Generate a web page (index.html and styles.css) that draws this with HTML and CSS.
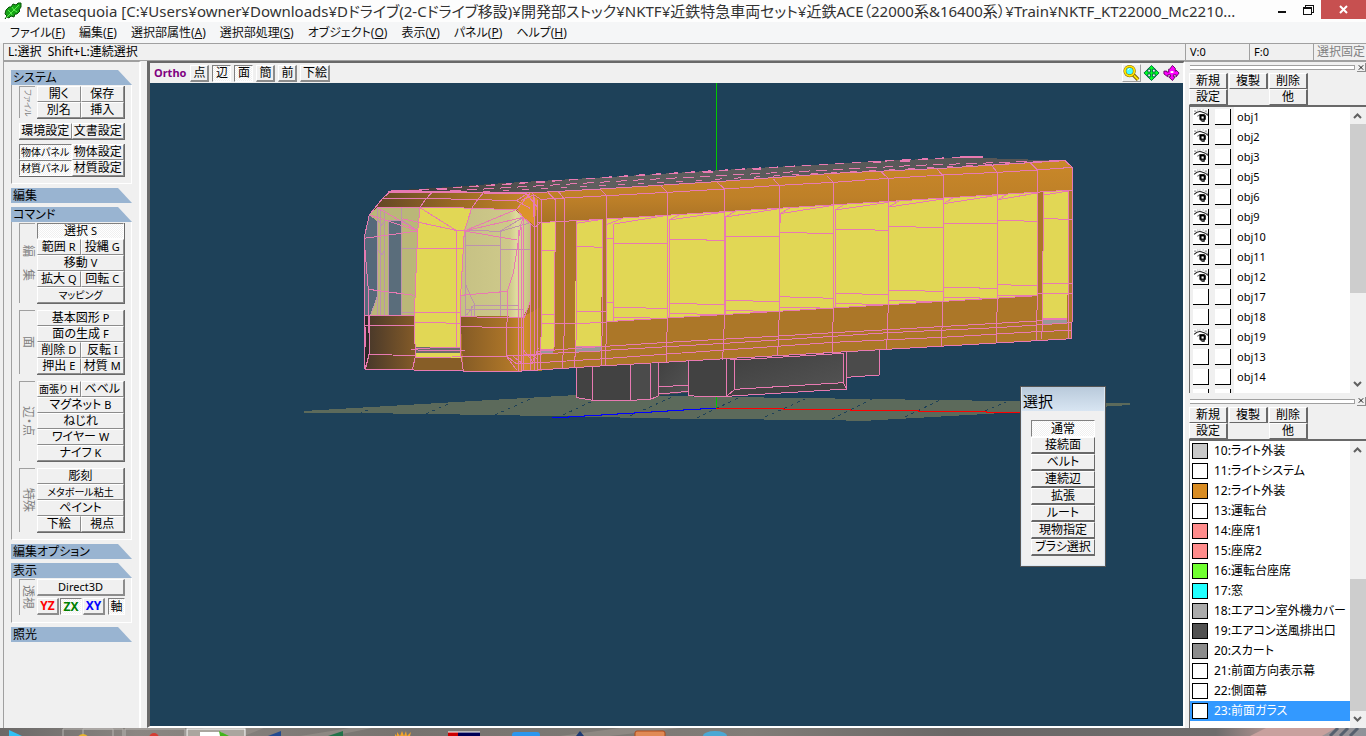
FILE: index.html
```html
<!DOCTYPE html>
<html lang="ja">
<head>
    <meta charset="UTF-8">
    <meta name="viewport" content="width=device-width, initial-scale=1.0">
    <title>Metasequoia</title>
    <link rel="stylesheet" href="styles.css">
</head>
<body>
    <!-- Iconos compartidos -->
    <svg class="defs" width="0" height="0">
        <symbol id="eye" viewBox="0 0 15 15">
            <path d="M1 5 Q5 1 9 3 Q13 4 14 6" fill="none" stroke="#222" stroke-width="1"/>
            <path d="M1 2h2M4 1h1M6 1h1M9 1h1M11 2h2M12 4h2" stroke="#999"/>
            <path d="M4 7 Q7 4 12 6" fill="none" stroke="#777"/>
            <path d="M6 5h5v1h1v4h-1v2H8v-1H7v-1H6z" fill="#000"/>
            <path d="M8 10h2v1H8z" fill="#777"/>
            <rect x="8" y="7" width="2" height="2" fill="#fff"/>
        </symbol>
        <symbol id="up" viewBox="0 0 15 17"><path d="M4 11 L7.500 7.500 L11 11" fill="none" stroke="#606060" stroke-width="2"/></symbol>
        <symbol id="down" viewBox="0 0 15 17"><path d="M4 6 L7.500 9.500 L11 6" fill="none" stroke="#606060" stroke-width="2"/></symbol>
        <symbol id="close" viewBox="0 0 9 9"><path d="M2 2l5 5M7 2l-5 5" stroke="#000" fill="none"/></symbol>
    </svg>

    <header class="titlebar">
        <svg class="leaf" viewBox="0 0 18 18">
            <path d="M1 17 L3 14 L1 12 L2 8 L5 5 L7 5 L9 2 L12 3 L14 1 L17 1 L17 5 L15 8 L16 9 L13 12 L11 12 L10 15 L7 14 L5 16 L3 15 Z" fill="#17a317" stroke="#075207"/>
            <path d="M2 16 L15 3 M4 8 L7 11 M8 5 L10 8 M8 13 L7 11 M13 10 L10 8" stroke="#5cf04c" fill="none"/>
        </svg>
        <h1>Metasequoia [C:¥Users¥owner¥Downloads¥Dドライブ(2-Cドライブ移設)¥開発部ストック¥NKTF¥近鉄特急車両セット¥近鉄ACE（22000系&amp;16400系）¥Train¥NKTF_KT22000_Mc2210...</h1>
        <div class="window-buttons">
            <button aria-label="最小化"><svg width="10" height="12" viewBox="0 0 10 12"><path d="M1 7h8v2H1z" fill="#111"/></svg></button>
            <button aria-label="元に戻す"><svg width="12" height="12" viewBox="0 0 12 12"><path d="M3 3V1h8v7H9M1 3h8v7H1zM1 4h8" fill="none" stroke="#111" shape-rendering="crispEdges"/></svg></button>
            <button class="quit" aria-label="閉じる"><svg width="10" height="10" viewBox="0 0 10 10"><path d="M1 1l7 7M8 1l-7 7" stroke="#fff" stroke-width="2"/></svg></button>
        </div>
    </header>

    <nav class="menubar">
        <a href="#">ファイル(<u>F</u>)</a>
        <a href="#">編集(<u>E</u>)</a>
        <a href="#">選択部属性(<u>A</u>)</a>
        <a href="#">選択部処理(<u>S</u>)</a>
        <a href="#">オブジェクト(<u>O</u>)</a>
        <a href="#">表示(<u>V</u>)</a>
        <a href="#">パネル(<u>P</u>)</a>
        <a href="#">ヘルプ(<u>H</u>)</a>
    </nav>

    <div class="status">
        <span class="hint">L:選択&nbsp; Shift+L:連続選択</span>
        <span class="count">V:0</span>
        <span class="count">F:0</span>
        <span class="lock">選択固定</span>
    </div>

    <main>
        <aside class="sidebar">
            <section>
                <h2>システム</h2>
                <div class="body system">
                    <div class="group">
                        <span class="side small">ファイル</span>
                        <div class="keys">
                            <button>開く</button><button>保存</button>
                            <button>別名</button><button>挿入</button>
                        </div>
                    </div>
                    <div class="keys full">
                        <button>環境設定</button><button>文書設定</button>
                    </div>
                    <div class="keys full">
                        <button class="on tight">物体パネル</button><button>物体設定</button>
                        <button class="on tight">材質パネル</button><button>材質設定</button>
                    </div>
                </div>
            </section>
            <section><h2>編集</h2></section>
            <section>
                <h2>コマンド</h2>
                <div class="body">
                    <div class="group">
                        <span class="side">編　集</span>
                        <div class="keys">
                            <button class="wide on">選択 <i>S</i></button>
                            <button>範囲 <i>R</i></button><button>投縄 <i>G</i></button>
                            <button class="wide">移動 <i>V</i></button>
                            <button>拡大 <i>Q</i></button><button>回転 <i>C</i></button>
                            <button class="wide tight">マッピング</button>
                        </div>
                    </div>
                    <div class="group">
                        <span class="side">面</span>
                        <div class="keys">
                            <button class="wide">基本図形 <i>P</i></button>
                            <button class="wide">面の生成 <i>F</i></button>
                            <button>削除 <i>D</i></button><button>反転 <i>I</i></button>
                            <button>押出 <i>E</i></button><button>材質 <i>M</i></button>
                        </div>
                    </div>
                    <div class="group">
                        <span class="side">辺・点</span>
                        <div class="keys">
                            <button class="tight">面張り <i>H</i></button><button>ベベル</button>
                            <button class="wide">マグネット <i>B</i></button>
                            <button class="wide">ねじれ</button>
                            <button class="wide">ワイヤー <i>W</i></button>
                            <button class="wide">ナイフ <i>K</i></button>
                        </div>
                    </div>
                    <div class="group">
                        <span class="side">特殊</span>
                        <div class="keys">
                            <button class="wide">彫刻</button>
                            <button class="wide tight">メタボール粘土</button>
                            <button class="wide">ペイント</button>
                            <button>下絵</button><button>視点</button>
                        </div>
                    </div>
                </div>
            </section>
            <section><h2>編集オプション</h2></section>
            <section>
                <h2>表示</h2>
                <div class="body">
                    <div class="group">
                        <span class="side">透視</span>
                        <div class="display">
                            <button class="raised direct">Direct3D</button>
                            <div class="axes">
                                <button class="raised yz">YZ</button>
                                <button class="on zx">ZX</button>
                                <button class="raised xy">XY</button>
                                <button class="on axis">軸</button>
                            </div>
                        </div>
                    </div>
                </div>
            </section>
            <section><h2>照光</h2></section>
        </aside>

        <section class="view">
            <div class="viewbar">
                <b>Ortho</b>
                <button class="raised">点</button>
                <button class="on">辺</button>
                <button class="on">面</button>
                <button class="raised">簡</button>
                <button class="raised">前</button>
                <button class="raised long">下絵</button>
                <div class="tools">
                    <button class="magnify" aria-label="拡大"><svg width="18" height="18" viewBox="0 0 18 18"><path d="M10 10l6 6" stroke="#806000" stroke-width="4"/><path d="M10 10l6 6" stroke="#ffe600" stroke-width="2"/><circle cx="7" cy="7" r="5" fill="#4ff" stroke="#806000" stroke-width="3"/><circle cx="7" cy="7" r="5" fill="none" stroke="#ffe600" stroke-width="2"/><path d="M5 6l2-2" stroke="#fff"/></svg></button>
                    <button aria-label="移動"><svg width="18" height="18" viewBox="0 0 18 18"><path d="M9 1l4 4h-3v3h3V5l4 4-4 4v-3h-3v3h3l-4 4-4-4h3v-3H5v3L1 9l4-4v3h3V5H5z" fill="#0f2" stroke="#064" /></svg></button>
                    <button aria-label="回転"><svg width="18" height="18" viewBox="0 0 18 18"><path d="M10 1l3 3v3h1V6l3 3-3 4v-2h-3v2h2l-3 4-4-4h2v-2H5v2L1 10V7h3v1h2V5h1z" fill="#f0f" stroke="#606"/><path d="M8 7h3v2H8z" fill="#fff"/></svg></button>
                </div>
            </div>
            <div class="canvas">
                <svg class="scene" viewBox="150 83 1033 643" preserveAspectRatio="xMidYMid slice">
                    <defs>
                        <linearGradient id="roof" x1="0" x2="1" y1="0" y2="0"><stop offset="0" stop-color="#3c3935"/><stop offset=".3" stop-color="#5f5f5f"/><stop offset="1" stop-color="#555"/></linearGradient>
                        <linearGradient id="brow" x1="0" x2="1" y1="0" y2="0"><stop offset="0" stop-color="#5f4526"/><stop offset=".5" stop-color="#986824"/><stop offset="1" stop-color="#c98829"/></linearGradient>
                        <linearGradient id="band" x1="0" x2="0" y1="0" y2="1"><stop offset="0" stop-color="#c98829"/><stop offset=".6" stop-color="#be8028"/><stop offset="1" stop-color="#a87226"/></linearGradient>
                        <linearGradient id="noseLeft" x1="0" x2="1" y1="0" y2="0"><stop offset="0" stop-color="#45362a"/><stop offset="1" stop-color="#845b28"/></linearGradient>
                        <linearGradient id="noseRight" x1="0" x2="1" y1="0" y2="0"><stop offset="0" stop-color="#845b26"/><stop offset=".6" stop-color="#ae7628"/><stop offset=".8" stop-color="#d08d2b"/><stop offset="1" stop-color="#ac7728"/></linearGradient>
                        <linearGradient id="glass" x1="0" x2="1" y1="0" y2="0"><stop offset="0" stop-color="#c6c184"/><stop offset=".7" stop-color="#cec98a"/><stop offset=".8" stop-color="#dfdb9e"/><stop offset="1" stop-color="#c5bf83"/></linearGradient>
                        <linearGradient id="box" x1="0" x2="1" y1="0" y2="1"><stop offset="0" stop-color="#404040"/><stop offset="1" stop-color="#535353"/></linearGradient>
                    </defs>

                    <!-- Suelo y ejes -->
                    <path d="M304 411L576 395L657 396L940 400L1130 403L1130 405L1021 412L862 421L830 420L695 419L494 415L359 413L304 413Z" fill="#5c6a5b"/>
                    <path d="M359 414l13-6M426 414l22-10M495 415l35-16M563 415l32-15M630 416l42-19M697 418l43-21M765 417l40-18M832 419l40-20M905 417l35-17M985 411l21-9" stroke="#1e4159" stroke-dasharray="3 4"/>
                    <path d="M716.500 83V174M716.500 397V408" stroke="#00c800" fill="none"/>
                    <path d="M716 408.500h67v1h67v1h68v1h68v1h40" stroke="#f00" fill="none"/>
                    <path d="M552 417.500h16v-1h16v-1h17v-1h16v-1h17v-1h17v-1h16v-1h16v-1h17v-1h16" stroke="#00f" fill="none"/>

                    <svg x="350" y="140" width="800" height="320" viewBox="0 0 2400 960">
                        <!-- Bajos del coche -->
                        <g fill="#424242" stroke="#e87ab2" stroke-width="3">
                            <path d="M680 660V773L728 781H842L902 778V650Z"/>
                            <path d="M842 650V781L902 778L926 767V650Z" fill="#4b4b4b"/>
                            <path d="M728 660V781M902 650V778" fill="none"/>
                            <path d="M926 650V767L1015 757V650Z" fill="url(#box)" stroke="none"/>
                            <path d="M926 650V767M926 740L1015 736M926 762L1015 754" fill="none"/>
                            <path d="M1015 650V766L1040 769H1130V640Z"/>
                            <path d="M1130 655V769L1490 747V635Z"/>
                            <path d="M1154 660V748L1480 728V640Z" fill="url(#box)"/>
                            <path d="M1130 769L1154 748M1480 728L1490 747M1130 655L1154 660" fill="none"/>
                            <path d="M1490 630V712L1588 705V622Z" fill="#4b4b4b"/>
                        </g>

                        <!-- Techo -->
                        <path d="M120 152L270 143L450 130L860 106L1200 85L1580 64L1830 52L2145 62L2040 72L1775 88L1450 104L1100 128L750 149L575 159Z" fill="url(#roof)"/>
                        <path d="M208 150L860 106L1580 64L1830 52" stroke="#e87ab2" stroke-width="4" stroke-dasharray="28 22" fill="none"/>
                        <path d="M300 153L900 118L1700 76L2145 61" stroke="#e87ab2" stroke-width="3" stroke-dasharray="32 18" fill="none"/>
                        <path d="M400 156L950 126L1700 84L2050 66" stroke="#e87ab2" stroke-width="3" stroke-dasharray="20 38" fill="none"/>
                        <path d="M260 147h30M560 127h26M1060 97h28M1210 87h22M1570 66h22M1650 62h30M1830 52h70" stroke="#e87ab2" stroke-width="6"/>

                        <!-- Caja -->
                        <path d="M115 155L575 157L750 147L1100 125L1450 100L1775 85L2040 68L2145 62L2167 82V500L2165 596L1610 628L750 678L500 694L340 693L45 687L42 555V295L58 225L98 175Z" fill="#ac7728"/>
                        <path d="M575 157L750 147L1100 125L1450 100L1775 85L2040 68L2145 62L2167 82V150L1450 195L770 237L560 248L540 160Z" fill="url(#band)"/>
                        <path d="M115 155L560 157L500 208L365 205L82 203L58 225L98 175Z" fill="url(#brow)"/>
                        <path d="M500 205L530 162L565 178L552 255L520 232Z" fill="#dc932b"/>

                        <!-- Frontal -->
                        <path d="M58 225L82 245V470L62 525H45L42 295Z" fill="#56697a"/>
                        <path d="M80 203H210L203 275L193 525H60L82 470V245L58 225Z" fill="#bab778"/>
                        <path d="M116 240H155V525H116Z" fill="#5a6d7b"/>
                        <path d="M210 203L365 205L343 273L332 525V620H196L193 525L203 275Z" fill="#e1d755"/>
                        <path d="M365 205L495 208L520 232L541 248V485L520 530L332 528L343 273Z" fill="url(#glass)"/>
                        <path d="M42 528L193 525L196 650L190 690L45 687Z" fill="url(#noseLeft)"/>
                        <path d="M332 528L520 530L575 500V692L500 694L340 693Z" fill="url(#noseRight)"/>
                        <path d="M196 620H332V640H196Z" fill="#6c6c6c"/>
                        <path d="M196 640H332V653H196Z" fill="#e1d755"/>
                        <path d="M196 653H332L340 692L190 690Z" fill="#875e27"/>
                        <path d="M42 528H56V640L45 687Z" fill="#2b2928"/>

                        <!-- Lateral -->
                        <g fill="#e1d755">
                            <path d="M575 248L615 244L612 628H572Z"/>
                            <path d="M678 241L757 238L753 618L675 620Z"/>
                            <path d="M770 237L2062 157V467L770 545Z"/>
                            <path d="M2080 155L2155 152L2152 535H2078Z"/>
                        </g>
                        <path d="M572 630L610 628V640L572 643ZM675 622L753 620V632L675 636ZM2076 537H2152V548L2076 555Z" fill="#999"/>

                        <g fill="none" stroke="#bd93ac" stroke-width="3">
                            <path d="M82 205V525M92 210V525M104 210V525M116 240V525M155 203V525M116 240H155L203 272M155 325H200M155 518H193M84 330l12 14 8-16M84 240l10 16 12-16M62 525l20-55"/>
                            <path d="M345 273V528M345 316H451M451 270V528M345 271L451 274L541 248M451 328H541M345 430L372 490V528M350 525L372 495H505M345 508H520M365 497V528M451 273L520 232"/>
                        </g>

                        <g fill="none" stroke="#e87ab2" stroke-width="3">
                            <!-- contorno -->
                            <path d="M115 155L575 157L750 147L1100 125L1450 100L1775 85L2040 68L2145 62L2167 82V500L2165 596L1610 628L750 678L500 694L340 693L45 687L58 640V528"/>
                            <path d="M45 687L42 555V295L58 225L98 175L124 152H208"/>
                            <path d="M98 175H215L390 179L500 182L530 162M115 158H380L470 162L575 157M82 203H330L365 206L500 208L540 160M58 225L98 175"/>
                            <path d="M250 153L225 180L210 203L203 275L193 525L196 650L187 690M405 153L382 180L365 205L343 273L332 465V640L340 692"/>
                            <path d="M58 225L203 272L82 203M210 203L318 271H343M155 236L318 271M343 273L500 208M343 273L520 232M343 273L500 300M42 295L203 273M318 271V620M200 325H343M55 448L193 466M332 466L472 454M193 517L332 519M196 547L332 550M42 526H193M42 556H196M332 530L472 533H520M332 560L520 563"/>
                            <path d="M42 295L55 448L58 642L196 648M196 625L332 622M184 628L225 632H346M196 653L470 648L575 644M58 642L48 680M45 560V620"/>
                            <path d="M520 232L512 256L490 400L472 454L470 650L500 690M504 270V694M514 260V694M520 232V690M541 248V485L520 540M541 485V694M553 170V694M562 180V694M500 208L520 232L554 262L575 246M530 162L565 205M545 160L575 180M500 182L540 205M512 182L550 165L553 262M575 180V500L571 690M470 648L500 672L553 668M522 632L548 665L565 625M540 640L560 655M490 650L520 672"/>
                            <!-- puertas -->
                            <path d="M594 157L616 180V244L612 628V690M624 153L643 178V570L637 685M575 178L770 167M560 248L757 238M575 331H615M575 522L615 524M575 552L770 548M678 241V600L673 684M678 319L757 322M678 514L770 516M757 238V560L753 675M770 165V548L766 678M675 620H753M572 628H612"/>
                            <path d="M500 672L750 657M520 644L750 633M560 634L750 620M678 250L757 238"/>
                            <!-- montantes -->
                            <path d="M750 147L770 167M930 135L952 157V535L949 667M1100 125L1124 147V523L1118 660M1270 117L1288 136V515L1283 645M1430 107L1450 127V505L1447 636M1593 95L1615 115V495L1610 628M1760 86L1779 107V485L1774 618M1925 77L1942 97V475L1939 607M2040 68L2062 90V467L2059 600M2080 155L2078 535L2075 598M2155 152V595"/>
                            <path d="M791 252V543M958 240V535M1127 230V523M1455 208V505M1781 190V485M1290 220V250M1616 200V230"/>
                            <!-- franjas -->
                            <path d="M770 167L952 157L1124 147L1288 136L1450 127L1615 115L1779 105L1942 97L2062 90L2167 82"/>
                            <path d="M770 237L2167 150M770 545L2062 467"/>
                            <path d="M750 620L952 607L1288 588L1450 578L1615 569L1940 550L2075 542M750 632L1124 610L1450 589L1615 578L1940 563L2167 548M750 657L952 642L1450 607L1775 592L2060 575L2167 571"/>
                            <path d="M770 254L820 234M791 252L952 226M958 240L1124 216M958 240L990 223M1127 231L1288 206M1127 231L1158 212M1290 221L1450 196M1290 221L1320 203M1455 210L1615 187M1455 210L1485 192M1617 201L1779 177M1617 201L1648 182M1781 191L1942 166M1781 191L1812 172M1944 179L2062 159M1944 179L1970 164M2080 165L2155 153"/>
                            <path d="M770 295H791M791 310H952M958 298L1124 301M1127 290H1288M1288 277L1450 281M1455 267L1615 271M1615 260L1779 262M1779 250H1942M1942 241L2062 244M2080 236L2167 238"/>
                            <path d="M770 487H791M791 501L952 506M958 490L1124 494M1127 481L1288 485M1288 470L1450 475M1455 460L1615 464M1615 451L1779 454M1779 442L1942 445M1942 434L2062 437M2080 430L2167 432M2062 460H2167"/>
                            <path d="M791 532L952 535M958 520L1124 524M1127 511L1288 515M1288 501L1450 505M1455 490L1615 494M1615 481L1779 485M1779 472L1942 475M1942 465H2062"/>
                        </g>
                        <path d="M2078 537H2152" stroke="#e87ab2" stroke-width="4"/>
                    </svg>
                </svg>

                <div class="dialog">
                    <h3>選択</h3>
                    <div class="choices">
                        <button class="on">通常</button>
                        <button>接続面</button>
                        <button>ベルト</button>
                        <button>連続辺</button>
                        <button>拡張</button>
                        <button>ルート</button>
                        <button>現物指定</button>
                        <button>ブラシ選択</button>
                    </div>
                </div>
            </div>
        </section>

        <aside class="panels">
            <section class="panel objects">
                <div class="grip"><span></span><button aria-label="閉じる"><svg width="9" height="9"><use href="#close"/></svg></button></div>
                <div class="actions">
                    <button>新規</button><button>複製</button><button>削除</button>
                    <button>設定</button><span></span><button>他</button>
                </div>
                <div class="list">
                    <ul>
                        <li><label><input type="checkbox" checked><svg><use href="#eye"/></svg></label><input type="checkbox" aria-label="obj1"><span>obj1</span></li>
                        <li><label><input type="checkbox" checked><svg><use href="#eye"/></svg></label><input type="checkbox" aria-label="obj2"><span>obj2</span></li>
                        <li><label><input type="checkbox" checked><svg><use href="#eye"/></svg></label><input type="checkbox" aria-label="obj3"><span>obj3</span></li>
                        <li><label><input type="checkbox" checked><svg><use href="#eye"/></svg></label><input type="checkbox" aria-label="obj5"><span>obj5</span></li>
                        <li><label><input type="checkbox" checked><svg><use href="#eye"/></svg></label><input type="checkbox" aria-label="obj6"><span>obj6</span></li>
                        <li><label><input type="checkbox" checked><svg><use href="#eye"/></svg></label><input type="checkbox" aria-label="obj9"><span>obj9</span></li>
                        <li><label><input type="checkbox" checked><svg><use href="#eye"/></svg></label><input type="checkbox" aria-label="obj10"><span>obj10</span></li>
                        <li><label><input type="checkbox" checked><svg><use href="#eye"/></svg></label><input type="checkbox" aria-label="obj11"><span>obj11</span></li>
                        <li><label><input type="checkbox" checked><svg><use href="#eye"/></svg></label><input type="checkbox" aria-label="obj12"><span>obj12</span></li>
                        <li><label><input type="checkbox"><svg><use href="#eye"/></svg></label><input type="checkbox" aria-label="obj17"><span>obj17</span></li>
                        <li><label><input type="checkbox"><svg><use href="#eye"/></svg></label><input type="checkbox" aria-label="obj18"><span>obj18</span></li>
                        <li><label><input type="checkbox" checked><svg><use href="#eye"/></svg></label><input type="checkbox" aria-label="obj19"><span>obj19</span></li>
                        <li><label><input type="checkbox"><svg><use href="#eye"/></svg></label><input type="checkbox" aria-label="obj13"><span>obj13</span></li>
                        <li><label><input type="checkbox"><svg><use href="#eye"/></svg></label><input type="checkbox" aria-label="obj14"><span>obj14</span></li>
                        <li><label><input type="checkbox"><svg><use href="#eye"/></svg></label><input type="checkbox" aria-label="obj"><span></span></li>
                    </ul>
                    <div class="scroll">
                        <svg><use href="#up"/></svg>
                        <div class="track top"><div class="thumb"></div></div>
                        <svg><use href="#down"/></svg>
                    </div>
                </div>
            </section>

            <section class="panel materials">
                <div class="grip"><span></span><button aria-label="閉じる"><svg width="9" height="9"><use href="#close"/></svg></button></div>
                <div class="actions">
                    <button>新規</button><button>複製</button><button>削除</button>
                    <button>設定</button><span></span><button>他</button>
                </div>
                <div class="list">
                    <ul>
                        <li><i class="swatch silver"></i>10:ライト外装</li>
                        <li><i class="swatch"></i>11:ライトシステム</li>
                        <li><i class="swatch orange"></i>12:ライト外装</li>
                        <li><i class="swatch"></i>13:運転台</li>
                        <li><i class="swatch pink"></i>14:座席1</li>
                        <li><i class="swatch pink"></i>15:座席2</li>
                        <li><i class="swatch green"></i>16:運転台座席</li>
                        <li><i class="swatch cyan"></i>17:窓</li>
                        <li><i class="swatch gray"></i>18:エアコン室外機カバー</li>
                        <li><i class="swatch dark"></i>19:エアコン送風排出口</li>
                        <li><i class="swatch mid"></i>20:スカート</li>
                        <li><i class="swatch"></i>21:前面方向表示幕</li>
                        <li><i class="swatch"></i>22:側面幕</li>
                        <li class="selected"><i class="swatch"></i>23:前面ガラス</li>
                    </ul>
                    <div class="scroll">
                        <svg><use href="#up"/></svg>
                        <div class="track bottom"><div class="thumb"></div></div>
                        <svg><use href="#down"/></svg>
                    </div>
                </div>
            </section>
        </aside>
    </main>

    <footer class="taskbar">
        <svg viewBox="0 0 1366 8" preserveAspectRatio="xMinYMin slice">
            <defs>
                <linearGradient id="stone" x1="0" x2="1" y1="0" y2="0"><stop offset="0" stop-color="#6a6867"/><stop offset=".1" stop-color="#8b8682"/><stop offset=".3" stop-color="#77736f"/><stop offset=".55" stop-color="#817d78"/><stop offset=".7" stop-color="#6b6867"/><stop offset=".89" stop-color="#6e6c6c"/><stop offset=".93" stop-color="#b39693"/><stop offset="1" stop-color="#8d9299"/></linearGradient>
            </defs>
            <rect width="1366" height="8" fill="url(#stone)"/>
            <path d="M190 8l14-8h60l-20 8zM300 8l50-8h22l-40 8zM560 8l60-8h60l-70 8z" fill="#99938c" opacity=".6"/>
            <path d="M9 2l13 6H9z" fill="#2fc1f5"/>
            <path d="M63 8V1h50v7M83 8V1h40v7M125 8V1h60v7" fill="none" stroke="#b8b5b2"/>
            <rect x="187" y="1" width="58" height="8" fill="#aaa69f" stroke="#fff"/>
            <path d="M200 4h22v4h-22z" fill="#fff"/><path d="M219 3l10 5h-9z" fill="#43b51c"/>
            <circle cx="154" cy="10" r="5" fill="#d33c33"/><circle cx="83" cy="12" r="6" fill="#e8b62c"/>
            <path d="M268 8l13-5v5z" fill="#234b91"/><path d="M328 8l15-5v5z" fill="#22734a"/>
            <path d="M395 8v-2l2 2V4l3 4 2-5 2 5 2-5 1 5 4-4-1 4z" fill="#f3a42a"/>
            <rect x="448" y="4" width="32" height="4" fill="#005"/><rect x="448" y="4" width="10" height="4" fill="#c00"/><path d="M448 4h32" stroke="#fff"/>
            <rect x="512" y="4" width="28" height="6" rx="3" fill="#2c96ee"/><path d="M576 8l4-5 4 5z" fill="#1d3a73"/>
            <rect x="635" y="3" width="30" height="8" rx="2" fill="#e08a55" stroke="#ad4a1a"/>
            <ellipse cx="715" cy="8" rx="12" ry="5" fill="#4ba8d4"/>
            <path d="M1250 8l16-8h70l-14 8z" fill="#c8a19e"/><path d="M1330 8l8-8M1340 8l8-8M1350 8l8-8" stroke="#56606e" stroke-width="3"/>
        </svg>
    </footer>
</body>
</html>
```

FILE: styles.css
```css
* {
    box-sizing: border-box;
}

body {
    margin: 0;
    height: 100vh;
    display: flex;
    flex-direction: column;
    overflow: hidden;
    background-color: #F0F0F0;
    color: #000;
    font-family: 'Noto Sans', 'Noto Sans CJK JP', sans-serif;
    font-size: 12px;
    line-height: 16px;
    font-feature-settings: "palt";
    white-space: nowrap;
}

h1, h2, h3, ul {
    margin: 0;
    padding: 0;
    font-weight: normal;
}

i {
    font-style: normal;
}

button {
    display: flex;
    align-items: center;
    justify-content: center;
    gap: 3px;
    min-width: 0;
    margin: 0;
    padding: 0;
    border: 1px solid;
    border-color: #FFF #8C8C8C #8C8C8C #FFF;
    background-color: #F0F0F0;
    color: #000;
    font: inherit;
    font-feature-settings: inherit;
    line-height: 14px;
}

.on {
    border-color: #808080 #FFF #FFF #808080;
    background: repeating-conic-gradient(#FFF 0 25%, #F0F0F0 0 50%) 0 0 / 2px 2px;
}

.raised {
    border-width: 1px 2px 2px 1px;
}

.defs {
    position: absolute;
}

/* Barra de título */
.titlebar {
    display: flex;
    align-items: center;
    height: 22px;
    flex: none;
    padding-left: 4px;
    background-color: #FDFDFD;
}

.leaf {
    width: 18px;
    height: 18px;
    flex: none;
}

h1 {
    flex: 1;
    min-width: 0;
    padding-left: 4px;
    overflow: hidden;
    color: #333;
    font-size: 15px;
    line-height: 22px;
}

.window-buttons {
    display: flex;
    align-self: flex-start;
    flex: none;
}

.window-buttons button {
    width: 26px;
    height: 19px;
    border: none;
    background: none;
}

.window-buttons .quit {
    width: 45px;
    background-color: #C75050;
}

/* Menú */
.menubar {
    display: flex;
    gap: 14px;
    height: 21px;
    flex: none;
    padding: 3px 10px 2px;
    background-color: #F5F6F7;
}

.menubar a {
    color: #111;
    text-decoration: none;
}

.status {
    display: flex;
    height: 18px;
    flex: none;
    margin-left: 3px;
    border: 1px solid #A0A0A0;
    border-right: none;
    line-height: 16px;
}

.status .hint {
    flex: 1;
    padding-left: 4px;
}

.status .count {
    width: 64px;
    padding-left: 4px;
    border-left: 1px solid #A0A0A0;
    font-size: 11px;
}

.status .lock {
    width: 53px;
    padding-left: 3px;
    border-left: 1px solid #A0A0A0;
    color: #808080;
}

main {
    display: flex;
    flex: 1;
    min-height: 0;
}

/* Panel izquierdo */
.sidebar {
    display: flex;
    flex-direction: column;
    gap: 4px;
    width: 138px;
    flex: none;
    margin-left: 3px;
    padding: 8px 7px 0;
    border-top: 1px solid #A0A0A0;
    border-left: 1px solid #A0A0A0;
    border-right: 2px solid #FFF;
}

h2 {
    height: 15px;
    padding-left: 2px;
    background-color: #99B4D1;
    clip-path: polygon(0 0, 107px 0, 100% 100%, 0 100%);
    font-size: 12px;
    line-height: 15px;
}

.body {
    display: flex;
    flex-direction: column;
    gap: 7px;
    padding: 1px 6px 7px 7px;
    border-left: 1px solid #A0A0A0;
    border-right: 1px solid #FFF;
    border-bottom: 1px solid #FFF;
}

.body.system {
    gap: 5px;
}

.group {
    display: flex;
    gap: 2px;
}

.side {
    display: flex;
    align-items: center;
    justify-content: center;
    width: 16px;
    flex: none;
    border-top: 1px solid #A0A0A0;
    border-left: 1px solid #A0A0A0;
    color: #808080;
    writing-mode: vertical-rl;
    text-orientation: sideways;
    line-height: 14px;
}

.side.small {
    font-size: 8px;
}

.keys {
    display: grid;
    grid-template-columns: 1fr 1fr;
    grid-auto-rows: 16px;
    flex: 1;
    border-right: 1px solid #696969;
    border-bottom: 1px solid #696969;
    margin-bottom: -1px;
}

.keys .wide {
    grid-column: span 2;
}

.keys i {
    font-size: 11px;
}

.tight {
    font-size: 10px;
}

.display {
    display: flex;
    flex-direction: column;
    gap: 2px;
    flex: 1;
}

.direct {
    height: 17px;
    font-size: 11px;
}

.axes {
    display: flex;
    gap: 1px;
    font-weight: bold;
}

.axes button {
    width: 22px;
    height: 17px;
}

.yz {
    color: #F00;
}

.zx {
    color: #008000;
}

.xy {
    color: #00F;
}

.axes .axis {
    width: 17px;
    margin-left: auto;
    font-weight: normal;
}

/* Vista 3D */
.view {
    display: flex;
    flex-direction: column;
    flex: 1;
    min-width: 0;
    margin-left: 6px;
    border: 2px solid #696969;
    border-left-width: 3px;
    border-right-color: #FFF;
    border-bottom-color: #FFF;
}

.viewbar {
    display: flex;
    align-items: center;
    gap: 3px;
    height: 20px;
    flex: none;
    padding-left: 4px;
    background-color: #F0F0F0;
}

.viewbar b {
    margin-right: 1px;
    color: #800080;
    font-size: 11px;
}

.viewbar button {
    width: 19px;
    height: 17px;
}

.viewbar .long {
    width: 30px;
}

.tools {
    display: flex;
    gap: 1px;
    margin-left: auto;
    padding-right: 2px;
}

.viewbar .tools button {
    height: 18px;
    border-color: transparent;
}

.viewbar .tools .magnify {
    border-color: #FFF #A0A0A0 #A0A0A0 #FFF;
}

.canvas {
    position: relative;
    flex: 1;
    min-height: 0;
    background-color: #1E4159;
}

.scene {
    display: block;
    width: 100%;
    height: 100%;
    shape-rendering: crispEdges;
}

/* Ventana flotante sobre la vista */
.dialog {
    position: absolute;
    right: 77px;
    top: 303px;
    width: 86px;
    padding: 0 1px 1px;
    border: 1px solid #555;
    background-color: #DCE8F3;
}

h3 {
    height: 24px;
    padding: 2px 1px;
    background: linear-gradient(#B9CADB, #D8E5F2);
    font-size: 15px;
    line-height: 24px;
}

.choices {
    display: flex;
    flex-direction: column;
    padding: 9px;
    background-color: #F0F0F0;
}

.choices button {
    height: 17px;
    border-bottom: 2px solid #696969;
    border-right-color: #696969;
}

.choices .on {
    border-bottom: 1px solid #FFF;
    border-right-color: #FFF;
}

/* Paneles derechos */
.panels {
    display: flex;
    flex-direction: column;
    width: 181px;
    flex: none;
    padding-left: 4px;
    border-top: 1px solid #A0A0A0;
}

.panel {
    display: flex;
    flex-direction: column;
    min-height: 0;
}

.objects {
    flex: 333 1 0;
}

.materials {
    flex: 332 1 0;
}

.grip {
    display: flex;
    align-items: center;
    justify-content: space-between;
    height: 11px;
    flex: none;
    padding-left: 1px;
}

.grip span {
    flex: 1;
    height: 5px;
    margin-right: 2px;
    border: 1px solid #A0A0A0;
    border-left: none;
    background-color: #FFF;
}

.grip button {
    width: 9px;
    height: 9px;
    border-left: none;
    border-top: none;
}

.actions {
    display: grid;
    grid-template-columns: repeat(3, 40px);
    grid-auto-rows: 16px;
    flex: none;
}

.actions button {
    width: 39px;
    border-right: 2px solid #696969;
    border-bottom-color: #696969;
}

.list {
    display: flex;
    flex: 1;
    min-height: 0;
    border-top: 2px solid #696969;
    border-left: 1px solid #696969;
    background-color: #FFF;
}

.objects .list {
    margin-bottom: 3px;
}

.list ul {
    flex: 1;
    min-width: 0;
    overflow: hidden;
    list-style: none;
}

.objects ul {
    background: linear-gradient(to right, #F0F0F0 44px, #FFF 44px);
    font-size: 11px;
}

.list li {
    display: flex;
    align-items: center;
    height: 20px;
    padding-left: 2px;
}

.objects li {
    padding-left: 3px;
}

.objects li span {
    padding-left: 6px;
}

.objects label {
    display: grid;
    margin-right: 6px;
}

.objects label > * {
    grid-area: 1 / 1;
    width: 16px;
    height: 16px;
}

.objects input {
    appearance: none;
    width: 16px;
    height: 16px;
    margin: 0;
    border: solid #000;
    border-width: 0 1px 1px 0;
    background-color: #FFF;
}

.objects label svg {
    visibility: hidden;
}

.objects input:checked + svg {
    visibility: visible;
}

.materials li {
    gap: 6px;
}

.swatch {
    width: 16px;
    height: 16px;
    flex: none;
    border: 1px solid #000;
    background-color: #FFF;
}

.silver {
    background-color: #C8C8C8;
}

.orange {
    background-color: #D88C22;
}

.pink {
    background-color: #FF8C8C;
}

.green {
    background-color: #70FF30;
}

.cyan {
    background-color: #20FFFF;
}

.gray {
    background-color: #AAA;
}

.dark {
    background-color: #505050;
}

.mid {
    background-color: #8C8C8C;
}

.selected {
    background-color: #3399FF;
    color: #FFF;
}

.scroll {
    display: flex;
    flex-direction: column;
    width: 16px;
    flex: none;
    background-color: #F0F0F0;
}

.scroll svg {
    width: 15px;
    height: 17px;
    flex: none;
}

.track {
    display: flex;
    flex-direction: column;
    flex: 1;
}

.track.bottom {
    justify-content: flex-end;
}

.thumb {
    height: 67%;
    background-color: #CDCDCD;
}

.bottom .thumb {
    height: 52%;
}

.taskbar {
    height: 8px;
    flex: none;
}

.taskbar svg {
    display: block;
    width: 100%;
    height: 8px;
}
```
